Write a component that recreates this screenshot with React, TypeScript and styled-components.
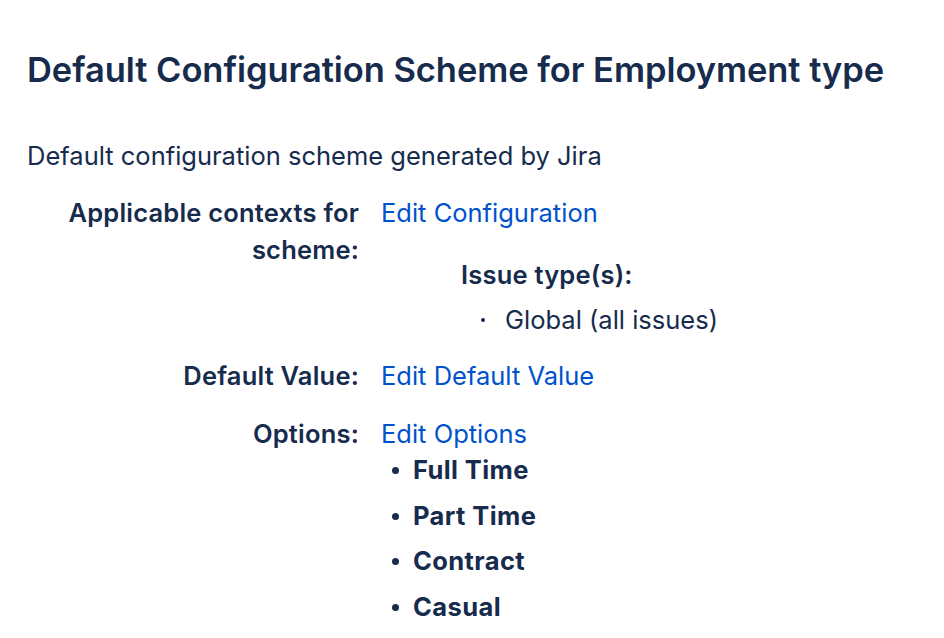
import React from "react";
import styled, { createGlobalStyle } from "styled-components";

const Global = createGlobalStyle`
  html, body { margin: 0; padding: 0; background: #fff; }
  body { font-family: Inter, "Noto Sans", sans-serif; color: #172B4D; }
`;

const Page = styled.div`
  padding: 50px 27px 0 27px;
`;

const Title = styled.h1`
  margin: 0;
  font-size: 34.5px;
  font-weight: 600;
  line-height: 40px;
  letter-spacing: -0.05px;
  color: #172B4D;
`;

const Description = styled.p`
  margin: 50px 0 0 0;
  font-size: 25.5px;
  line-height: 32px;
  color: #172B4D;
`;

const Grid = styled.div`
  display: grid;
  grid-template-columns: 332px 1fr;
  column-gap: 22px;
  margin-top: 22px;
  font-size: 25.5px;
  line-height: 37px;
`;

const Label = styled.div<{ $top?: number }>`
  text-align: right;
  font-weight: 600;
  letter-spacing: 0.2px;
  margin-top: ${(p) => p.$top ?? 0}px;
`;

const Value = styled.div<{ $top?: number }>`
  margin-top: ${(p) => p.$top ?? 0}px;
`;

const Link = styled.a`
  color: #0052CC;
  text-decoration: none;
`;

const Context = styled.div`
  margin: 25px 0 0 80px;
`;

const ContextTitle = styled.div`
  font-weight: 600;
  letter-spacing: 0.2px;
`;

const ContextList = styled.ul`
  margin: 8px 0 0 0;
  padding-left: 44px;
  list-style: none;
`;

const ContextItem = styled.li`
  position: relative;
  &::before {
    content: "";
    position: absolute;
    left: -24px;
    top: 17px;
    width: 4px;
    height: 4px;
    border-radius: 50%;
    background: #172B4D;
  }
`;

const OptionList = styled.ul`
  margin: -5px 0 0 0;
  padding-left: 32px;
  list-style: none;
`;

const OptionItem = styled.li`
  position: relative;
  font-weight: 700;
  letter-spacing: 0.4px;
  line-height: 45.5px;
  &::before {
    content: "";
    position: absolute;
    left: -21px;
    top: 20px;
    width: 7px;
    height: 7px;
    border-radius: 50%;
    background: #172B4D;
  }
`;

export default function App() {
  return (
    <>
      <Global />
      <Page>
        <Title>Default Configuration Scheme for Employment type</Title>
        <Description>Default configuration scheme generated by Jira</Description>
        <Grid>
          <Label>Applicable contexts for scheme:</Label>
          <Value>
            <Link href="#">Edit Configuration</Link>
            <Context>
              <ContextTitle>Issue type(s):</ContextTitle>
              <ContextList>
                <ContextItem>Global (all issues)</ContextItem>
              </ContextList>
            </Context>
          </Value>
          <Label $top={19}>Default Value:</Label>
          <Value $top={19}>
            <Link href="#">Edit Default Value</Link>
          </Value>
          <Label $top={21}>Options:</Label>
          <Value $top={21}>
            <Link href="#">Edit Options</Link>
            <OptionList>
              {["Full Time", "Part Time", "Contract", "Casual"].map((o) => (
                <OptionItem key={o}>{o}</OptionItem>
              ))}
            </OptionList>
          </Value>
        </Grid>
      </Page>
    </>
  );
}
